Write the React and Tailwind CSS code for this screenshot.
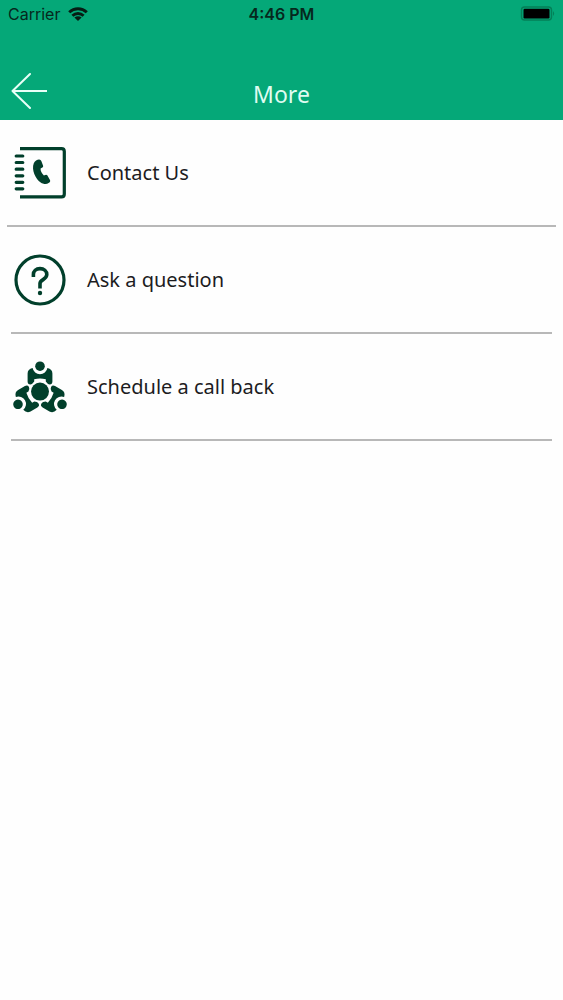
const BODY =
  'M13.6 20.4V12.5Q13.6 8.2 18.6 7A7.5 7.5 0 0 0 33.4 7Q38.4 8.2 38.4 12.5V20.4Q38.4 23.4 35.6 23.4Q33.6 23.4 31.8 20.6V18.2Q26 16.8 20.2 18.2V20.6Q18.4 23.4 16.4 23.4Q13.6 23.4 13.6 20.4Z';

function PhoneBookIcon() {
  return (
    <svg className="size-[52px] shrink-0" viewBox="0 0 52 52" fill="none" stroke="#013f2b" strokeWidth="3.2" aria-hidden="true">
      <path d="M6 1.7H47.5Q50.3 1.7 50.3 4.5V46.9Q50.3 49.9 47.5 49.9H6" />
      <path strokeLinecap="round" d="M2.2 9H8.8M2.2 15.5H8.8M2.2 22.2H8.8M2.2 28.8H8.8M2.2 35.3H8.8M2.2 41.8H8.8" />
      <path
        fill="#013f2b"
        stroke="none"
        d="M19.8 16.2C20.6 14 23.3 12.5 25 12.5C26.6 12.5 27.2 13.4 27.8 15.2L29.1 18.8C29.4 20 28.8 20.5 26.6 21.6C26.3 23.6 27.8 26.8 29.9 28.4C31.5 27.8 32.4 27.1 33.3 28.3L35.7 32.4C36.7 34 36.1 34.9 35 35.7C32.4 37.6 29.4 37.1 26.7 35.4C21.5 32 17.2 22.8 19.8 16.2Z"
      />
    </svg>
  );
}

function QuestionIcon() {
  return (
    <svg className="size-[52px] shrink-0" viewBox="0 0 52 52" fill="none" stroke="#013f2b" strokeWidth="3.2" aria-hidden="true">
      <circle cx="26" cy="26" r="24" />
      <path strokeWidth="3.6" d="M19.4 23V20.6C19.4 17 22 14.6 26 14.6C30 14.6 32.8 17 32.8 20.6C32.8 25.8 26 25.4 26 29.6V34.6" />
      <circle cx="26" cy="39" r="2.2" fill="#013f2b" stroke="none" />
    </svg>
  );
}

function MeetingIcon() {
  return (
    <svg className="size-[52px] shrink-0 overflow-visible" viewBox="0 0 52 52" fill="#013f2b" aria-hidden="true">
      <circle cx="26" cy="30.6" r="9" />
      {[0, 120, 240].map((angle) => (
        <g key={angle} transform={`rotate(${angle} 26 30.6)`}>
          <circle cx="26" cy="5.2" r="4.8" />
          <path d={BODY} />
        </g>
      ))}
    </svg>
  );
}

const items = [
  { label: 'Contact Us', Icon: PhoneBookIcon, line: 'mx-[7px]', pad: 'pl-[7px]' },
  { label: 'Ask a question', Icon: QuestionIcon, line: 'mx-[11px]', pad: 'pl-[3px]' },
  { label: 'Schedule a call back', Icon: MeetingIcon, line: 'mx-[11px]', pad: 'pl-[3px]' },
];

function StatusBar() {
  return (
    <div className="grid h-7 grid-cols-3 items-center px-2 font-['Inter','Liberation_Sans',sans-serif] text-base text-[#06281d]">
      <div className="flex items-center gap-2">
        <span>Carrier</span>
        <svg className="h-[14px] w-5" viewBox="0 0 20 14" fill="none" stroke="#061d14" strokeWidth="2.9" aria-label="Wi-Fi">
          <path d="M1.2 5.2C6.2 .5 13.8 .5 18.8 5.2M4.4 8.7C7.6 5.7 12.4 5.7 15.6 8.7" />
          <path fill="#061d14" stroke="none" d="M10 14L6.4 10.6Q10 7.8 13.6 10.6Z" />
        </svg>
      </div>
      <span className="text-center font-semibold">4:46 PM</span>
      <svg className="h-4 w-[35px] justify-self-end" viewBox="0 0 35 16" aria-label="Battery full">
        <rect x="1.5" y="1" width="30" height="13" rx="3" fill="none" stroke="#047f57" strokeWidth="1.4" />
        <rect x="3.5" y="2.8" width="26" height="9.6" rx="1.2" fill="#000" />
        <path d="M33 5Q35.2 7.5 33 10Z" fill="#047f57" />
      </svg>
    </div>
  );
}

export default function App() {
  return (
    <div className="min-h-screen bg-[#fefefe] font-['Noto_Sans',sans-serif]">
      <header className="bg-[#05a878]">
        <StatusBar />
        <div className="grid h-[92px] grid-cols-[1fr_auto_1fr] items-end px-[11px] pb-[10px]">
          <button type="button" aria-label="Back" className="w-9">
            <svg className="h-[38px] w-9" viewBox="0 0 36 38" fill="none" stroke="#e9fff7" strokeWidth="2" strokeLinecap="round" strokeLinejoin="round">
              <path d="M19 2L1.5 19L19 36M1.5 19H35.5" />
            </svg>
          </button>
          <h1 className="text-[23px] leading-8 text-[#dffcf1]">More</h1>
        </div>
      </header>
      <nav>
        <ul>
          {items.map(({ label, Icon, line, pad }) => (
            <li key={label} className={`border-b-2 border-[#b8b8b8] ${line}`}>
              <a href="#" className={`flex h-[105px] items-center gap-[21px] text-xl text-[#1c1c1e] ${pad}`}>
                <Icon />
                <span>{label}</span>
              </a>
            </li>
          ))}
        </ul>
      </nav>
    </div>
  );
}
